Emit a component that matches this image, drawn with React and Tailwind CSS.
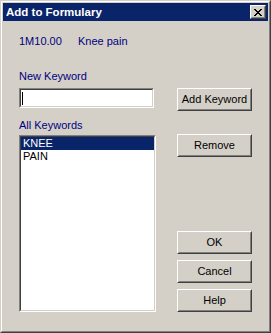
// App.jsx
// "Add to Formulary" dialog, classic Windows look

const raised =
  "border border-t-white border-l-white border-b-[#404040] border-r-[#404040]";
const raisedInner =
  "border border-t-[#d4d0c8] border-l-[#d4d0c8] border-b-[#808080] border-r-[#808080]";
const sunken =
  "border border-t-[#808080] border-l-[#808080] border-b-white border-r-white";
const sunkenInner =
  "border border-t-[#404040] border-l-[#404040] border-b-[#d4d0c8] border-r-[#d4d0c8]";

function Button({ children }) {
  return (
    <button type="button" className={`w-[75px] h-[23px] bg-[#d4d0c8] ${raised}`}>
      <div className={`h-full w-full flex items-center justify-center text-black ${raisedInner}`}>
        {children}
      </div>
    </button>
  );
}

function CloseButton() {
  return (
    <div className={`w-[16px] h-[14px] bg-[#d4d0c8] ${raised}`}>
      <div className={`h-full w-full flex items-center justify-center ${raisedInner}`}>
        <svg width="8" height="7" viewBox="0 0 8 7" shapeRendering="crispEdges">
          <path
            d="M0 0h2v1h-2zM6 0h2v1h-2zM1 1h2v1h-2zM5 1h2v1h-2zM2 2h4v1h-4zM3 3h2v1h-2zM2 4h4v1h-4zM1 5h2v1h-2zM5 5h2v1h-2zM0 6h2v1h-2zM6 6h2v1h-2z"
            fill="#000"
          />
        </svg>
      </div>
    </div>
  );
}

export default function App() {
  const keywords = ["KNEE", "PAIN"];
  const selected = 0;

  return (
    <div className="w-[271px] h-[333px] font-['Liberation_Sans',Arial,sans-serif] text-[11px] leading-[13px]">
      <div className="h-full border border-t-[#d4d0c8] border-l-[#d4d0c8] border-b-[#404040] border-r-[#404040]">
        <div className="h-full border border-t-white border-l-white border-b-[#808080] border-r-[#808080] bg-[#d4d0c8] p-px flex flex-col">
          {/* Title bar */}
          <div className="h-[18px] bg-[#0a246a] flex items-center justify-between pl-[3px] pr-[2px]">
            <span className="text-white font-bold text-[11.5px]">Add to Formulary</span>
            <CloseButton />
          </div>

          {/* Body */}
          <div className="px-[16px] pt-[14px] flex flex-col">
            <div className="flex text-[#000080]">
              <span className="w-[59px]">1M10.00</span>
              <span>Knee pain</span>
            </div>

            <div className="mt-[22px] text-[#000080]">New Keyword</div>

            <div className="mt-[5px] flex justify-between items-start">
              <div className={`w-[135px] h-[20px] bg-white ${sunken}`}>
                <div className={`h-full w-full flex items-center pl-[1px] ${sunkenInner}`}>
                  <div className="w-px h-[13px] bg-black" />
                </div>
              </div>
              <Button>Add Keyword</Button>
            </div>

            <div className="mt-[8px] text-[#000080]">All Keywords</div>

            <div className="mt-[3px] flex justify-between items-start">
              <div className={`w-[137px] h-[177px] bg-white ${sunken}`}>
                <div className={`h-full w-full ${sunkenInner}`}>
                  {keywords.map((k, i) => (
                    <div
                      key={k}
                      className={`h-[13px] pl-[2px] ${
                        i === selected ? "bg-[#0a246a] text-white" : "text-black"
                      }`}
                    >
                      {k}
                    </div>
                  ))}
                </div>
              </div>

              <div className="-mt-px h-[178px] flex flex-col justify-between">
                <Button>Remove</Button>
                <div className="flex flex-col gap-[6px]">
                  <Button>OK</Button>
                  <Button>Cancel</Button>
                  <Button>Help</Button>
                </div>
              </div>
            </div>
          </div>
        </div>
      </div>
    </div>
  );
}
